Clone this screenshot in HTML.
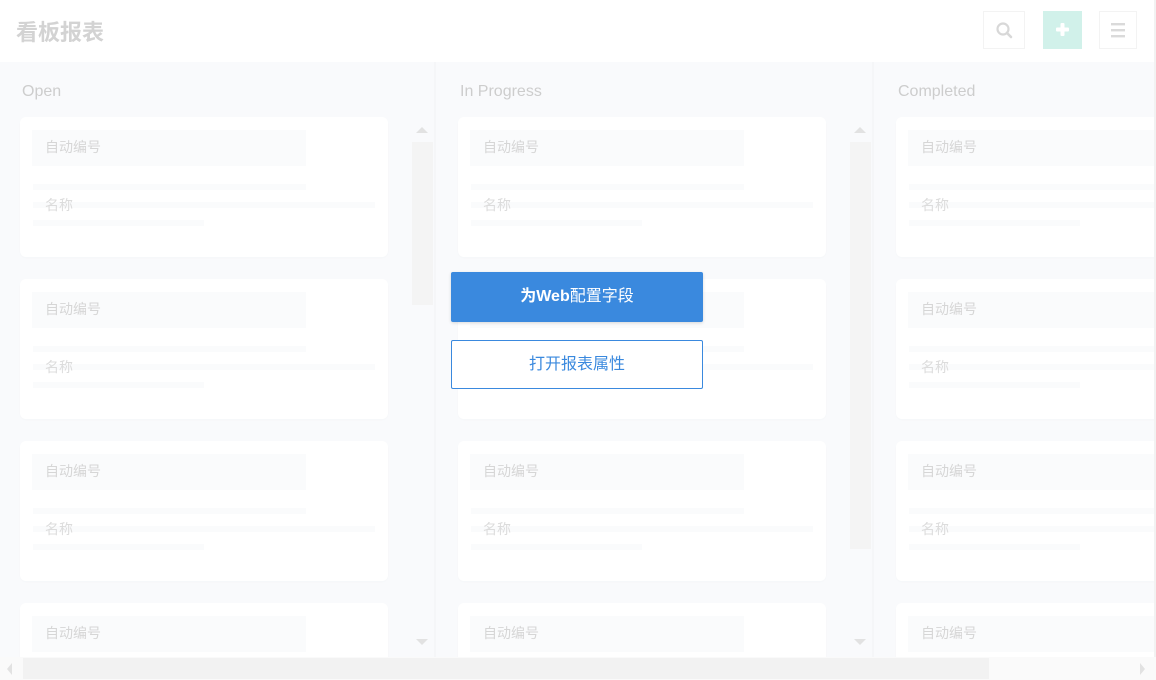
<!DOCTYPE html>
<html style="width:1156px;height:680px;overflow:hidden"><head><meta charset="utf-8"><style>
*{margin:0;padding:0;box-sizing:border-box}
body{width:1156px;height:680px;overflow:hidden;background:#f9fafc;position:relative;font-family:"Liberation Sans","Noto Sans CJK SC",sans-serif}
.abs{position:absolute}
.wrap{position:absolute;left:0;top:0;width:1156px;height:657px;overflow:hidden}
.hdr{left:0;top:0;width:1156px;height:62px;background:#fff}
.title{left:16px;top:15px;font-size:22px;font-weight:bold;color:#d3d3d3}
.ib{top:11px;height:38px;border:1px solid #f3f3f3;background:#fff}
.colt{top:83px;font-size:16px;color:#cdcdcd}
.div{top:62px;width:2px;height:596px;background:#f5f6f8}
.card{width:368px;height:140px;background:#fff;border-radius:6px;box-shadow:0 1px 2px rgba(0,0,0,0.02)}
.card .g{position:absolute;left:12px;top:13px;width:274px;height:36px;background:#fafbfc}
.card .t1{position:absolute;left:25px;top:20px;font-size:14px;color:#d6d6d6}
.card .l{position:absolute;left:13px;height:6px;background:#fafbfc}
.card .t2{position:absolute;left:25px;top:78px;font-size:14px;color:#dcdcdc}
.sb{width:21px;background:#f4f4f4}
.up{width:0;height:0;border-left:6px solid transparent;border-right:6px solid transparent;border-bottom:6px solid #e2e2e2}
.dn{width:0;height:0;border-left:6px solid transparent;border-right:6px solid transparent;border-top:6px solid #e2e2e2}
</style></head><body>
<div class="wrap">
<div class="abs hdr"></div>
<div class="abs title">看板报表</div>
<div class="abs ib" style="left:983px;width:42px"><svg width="40" height="36" viewBox="0 0 40 36"><circle cx="19" cy="17" r="5.5" fill="none" stroke="#d8d8d8" stroke-width="2.2"/><line x1="23" y1="21" x2="27" y2="25" stroke="#d8d8d8" stroke-width="2.6" stroke-linecap="round"/></svg></div>
<div class="abs" style="left:1043px;top:11px;width:39px;height:38px;background:#d1f1ea"><svg width="39" height="38"><rect x="17.5" y="12" width="4" height="13" rx="1" fill="#fff"/><rect x="13" y="16.5" width="13" height="4" rx="1" fill="#fff"/></svg></div>
<div class="abs ib" style="left:1099px;width:38px"><svg width="36" height="36"><rect x="11" y="11" width="14" height="2.4" fill="#dadada"/><rect x="11" y="17" width="14" height="2.4" fill="#dadada"/><rect x="11" y="23" width="14" height="2.4" fill="#dadada"/></svg></div>

<div class="abs div" style="left:434px"></div>
<div class="abs div" style="left:872px"></div>
<div class="abs colt" style="left:22px">Open</div>
<div class="abs colt" style="left:460px">In Progress</div>
<div class="abs colt" style="left:898px">Completed</div>

<div class="abs card" style="left:20px;top:117px"><div class="g"></div><div class="t1">自动编号</div><div class="l" style="top:67px;width:273px"></div><div class="l" style="top:85px;width:342px"></div><div class="l" style="top:103px;width:171px"></div><div class="t2">名称</div></div>
<div class="abs card" style="left:20px;top:279px"><div class="g"></div><div class="t1">自动编号</div><div class="l" style="top:67px;width:273px"></div><div class="l" style="top:85px;width:342px"></div><div class="l" style="top:103px;width:171px"></div><div class="t2">名称</div></div>
<div class="abs card" style="left:20px;top:441px"><div class="g"></div><div class="t1">自动编号</div><div class="l" style="top:67px;width:273px"></div><div class="l" style="top:85px;width:342px"></div><div class="l" style="top:103px;width:171px"></div><div class="t2">名称</div></div>
<div class="abs card" style="left:20px;top:603px"><div class="g"></div><div class="t1">自动编号</div></div>

<div class="abs card" style="left:458px;top:117px"><div class="g"></div><div class="t1">自动编号</div><div class="l" style="top:67px;width:273px"></div><div class="l" style="top:85px;width:342px"></div><div class="l" style="top:103px;width:171px"></div><div class="t2">名称</div></div>
<div class="abs card" style="left:458px;top:279px"><div class="g"></div><div class="t1">自动编号</div><div class="l" style="top:67px;width:273px"></div><div class="l" style="top:85px;width:342px"></div><div class="l" style="top:103px;width:171px"></div><div class="t2">名称</div></div>
<div class="abs card" style="left:458px;top:441px"><div class="g"></div><div class="t1">自动编号</div><div class="l" style="top:67px;width:273px"></div><div class="l" style="top:85px;width:342px"></div><div class="l" style="top:103px;width:171px"></div><div class="t2">名称</div></div>
<div class="abs card" style="left:458px;top:603px"><div class="g"></div><div class="t1">自动编号</div></div>

<div class="abs card" style="left:896px;top:117px"><div class="g"></div><div class="t1">自动编号</div><div class="l" style="top:67px;width:273px"></div><div class="l" style="top:85px;width:342px"></div><div class="l" style="top:103px;width:171px"></div><div class="t2">名称</div></div>
<div class="abs card" style="left:896px;top:279px"><div class="g"></div><div class="t1">自动编号</div><div class="l" style="top:67px;width:273px"></div><div class="l" style="top:85px;width:342px"></div><div class="l" style="top:103px;width:171px"></div><div class="t2">名称</div></div>
<div class="abs card" style="left:896px;top:441px"><div class="g"></div><div class="t1">自动编号</div><div class="l" style="top:67px;width:273px"></div><div class="l" style="top:85px;width:342px"></div><div class="l" style="top:103px;width:171px"></div><div class="t2">名称</div></div>
<div class="abs card" style="left:896px;top:603px"><div class="g"></div><div class="t1">自动编号</div></div>

<div class="abs up" style="left:416px;top:127px"></div>
<div class="abs sb" style="left:412px;top:142px;height:163px"></div>
<div class="abs dn" style="left:416px;top:639px"></div>
<div class="abs up" style="left:854px;top:127px"></div>
<div class="abs sb" style="left:850px;top:142px;height:407px"></div>
<div class="abs dn" style="left:854px;top:639px"></div>
<div class="abs" style="left:1154px;top:0;width:2px;height:658px;background:#f2f2f2"></div>
</div>

<div class="abs" style="left:0;top:657px;width:1156px;height:23px;background:#fafafa"></div>
<div class="abs" style="left:23px;top:658px;width:966px;height:21px;background:#f2f2f2"></div>
<div class="abs" style="left:7px;top:663px;width:0;height:0;border-top:6px solid transparent;border-bottom:6px solid transparent;border-right:5px solid #e2e2e2"></div>
<div class="abs" style="left:1140px;top:663px;width:0;height:0;border-top:6px solid transparent;border-bottom:6px solid transparent;border-left:5px solid #e2e2e2"></div>

<div class="abs" style="left:451px;top:272px;width:252px;height:50px;background:#3a89de;border-radius:2px;color:#fff;font-size:16px;line-height:50px;text-align:center;box-shadow:0 1px 3px rgba(0,0,0,0.15)"><span style="font-weight:bold">为Web</span>配置字段</div>
<div class="abs" style="left:451px;top:340px;width:252px;height:49px;background:#fff;border:1px solid #3a89de;border-radius:2px;color:#3a89de;font-size:16px;line-height:47px;text-align:center">打开报表属性</div>
</body></html>
